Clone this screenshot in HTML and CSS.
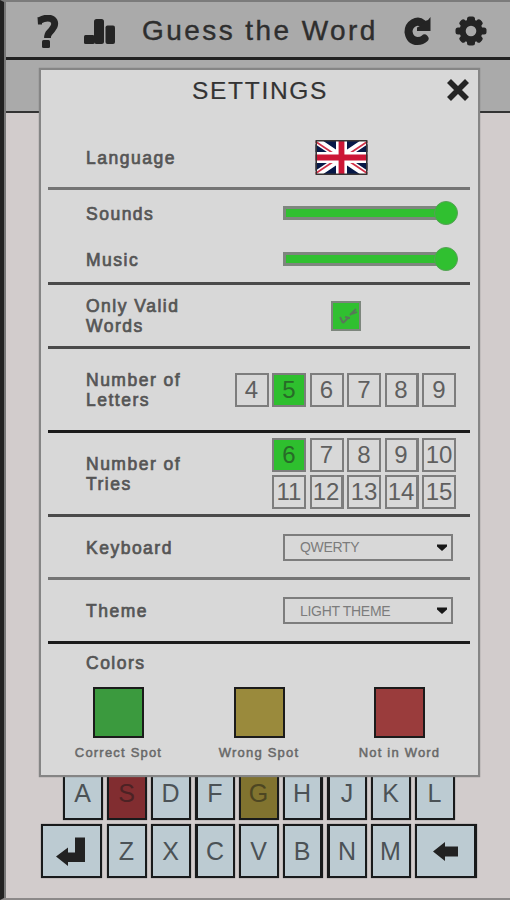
FILE: index.html
```html
<!DOCTYPE html>
<html lang="en">
<head>
<meta charset="utf-8">
<title>Guess the Word</title>
<link rel="stylesheet" href="styles.css">
</head>
<body>
<div class="app">
  <header class="topbar">
    <svg class="icon help" viewBox="0 0 24 34"><path d="M3.500 5.500Q11 1.500 16 4Q20 7 18 11.500Q16 15 13.500 17.500Q11.500 19.500 11.500 23" fill="none" stroke="#242424" stroke-width="6.800" stroke-linejoin="round"/><path d="M1.500 2L6 5V9.500H2Z" fill="#242424"/><rect x="6" y="25" width="8" height="8" rx="1.500" fill="#242424"/></svg>
    <svg class="icon stats" viewBox="0 0 32 26"><g fill="#242424"><rect x="0" y="16" width="10.500" height="9" rx="1.500"/><rect x="10" y="0" width="10" height="25" rx="2.500"/><rect x="21.500" y="6.500" width="9.500" height="18.500" rx="2"/></g></svg>
    <h1 class="title">Guess the Word</h1>
    <svg class="icon reload" viewBox="0 0 28 30"><path d="M18.500 7.500Q14.500 4 9.500 7Q4.500 10 4.500 16Q6 25 13.500 25Q18 25 20.500 22.500" fill="none" stroke="#242424" stroke-width="8" stroke-linecap="round"/><path d="M26.500 1V15H13V11.500L17 9.500L21 5L24 4Z" fill="#242424"/></svg>
    <svg class="icon gear" viewBox="-16 -15 32 30"><g fill="#242424"><rect x="-4" y="-14.500" width="8" height="29" rx="2.500"/><rect x="-15.500" y="-3.500" width="31" height="7" rx="2.500"/><g transform="rotate(45)"><rect x="-3.500" y="-14.500" width="7" height="29" rx="2.500"/><rect x="-14.500" y="-3.500" width="29" height="7" rx="2.500"/></g><circle r="11.500"/></g><circle r="5.300" fill="#aaa"/></svg>
  </header>
  <div class="subbar"></div>
  <main class="board">
    <div class="keys">
      <span class="key">A</span><span class="key red">S</span><span class="key">D</span><span class="key thick-l">F</span><span class="key gold">G</span><span class="key thick-r">H</span><span class="key thick-l">J</span><span class="key">K</span><span class="key">L</span>
    </div>
    <div class="keys">
      <span class="key wide enter"><svg viewBox="0 0 30 29"><path d="M19 .5H29V25H12V29L0 19.500L12 10.500V15.500H19Z"/></svg></span><span class="key">Z</span><span class="key">X</span><span class="key thick-l">C</span><span class="key">V</span><span class="key thick-r">B</span><span class="key thick-l">N</span><span class="key">M</span><span class="key wide back thick-r"><svg viewBox="0 0 25 19"><path d="M0 9.500L12 0V4.500H25V14.500H12V19Z"/></svg></span>
    </div>
  </main>
</div>

<section class="dialog">
  <div class="heading">
    <h2>SETTINGS</h2>
    <svg class="close" viewBox="0 0 24 24"><path d="M3 3L21 21M21 3L3 21" stroke="#242424" stroke-width="5.600"/></svg>
  </div>
  <div class="row language">
    <span class="label">Language</span>
    <svg class="flag" viewBox="0 0 52 35"><path fill="#071847" d="M0 0H52V35H0Z"/><path d="M0 0L52 35M52 0L0 35" stroke="#fff" stroke-width="7"/><path d="M0 1.500L24 17.500M28 17.500L52 33.500M52 1.500L28 17.500M24 17.500L0 33.500" stroke="#cf3148" stroke-width="1.700"/><path d="M26 0V35M0 17.500H52" stroke="#fff" stroke-width="11"/><path d="M26 0V35M0 17.500H52" stroke="#cc1636" stroke-width="5.800"/><path d="M.75 .75H51.250V34.250H.75Z" fill="none" stroke="#383434" stroke-width="1.500"/></svg>
  </div>
  <div class="row sound rule-soft"><span class="label">Sounds</span><span class="slider"><i class="knob"></i></span></div>
  <div class="row music"><span class="label">Music</span><span class="slider"><i class="knob"></i></span></div>
  <div class="row valid rule-mid"><span class="label">Only Valid<br>Words</span>
    <span class="check"><svg viewBox="0 0 26 26"><path d="M7 14L10 20" fill="none" stroke="#587759" stroke-width="2"/><path d="M10 20L15 15M17 12L23 6M12 14L17 15M19 11L24 9" fill="none" stroke="#587759" stroke-width="1.800"/></svg></span>
  </div>
  <div class="row letters rule-mid"><span class="label">Number of<br>Letters</span>
    <div class="nums six"><b>4</b><b class="on">5</b><b>6</b><b>7</b><b class="shade">8</b><b>9</b></div>
  </div>
  <div class="row tries rule-dark"><span class="label">Number of<br>Tries</span>
    <div class="nums five"><b class="on">6</b><b>7</b><b>8</b><b class="shade">9</b><b>10</b><b>11</b><b class="shade">12</b><b>13</b><b class="shade">14</b><b>15</b></div>
  </div>
  <div class="row keyboard rule-mid"><span class="label">Keyboard</span>
    <span class="select"><span>QWERTY</span><svg viewBox="0 0 10 7"><path d="M0 .5H10V2.500L5 7L0 2.500Z"/></svg></span>
  </div>
  <div class="row theme rule-soft"><span class="label">Theme</span>
    <span class="select"><span>LIGHT THEME</span><svg viewBox="0 0 10 7"><path d="M0 .5H10V2.500L5 7L0 2.500Z"/></svg></span>
  </div>
  <div class="colors rule-dark">
    <span class="label">Colors</span>
    <div class="swatches">
      <div class="swatch"><i class="green"></i><span>Correct Spot</span></div>
      <div class="swatch"><i class="yellow"></i><span>Wrong Spot</span></div>
      <div class="swatch"><i class="crimson"></i><span>Not in Word</span></div>
    </div>
  </div>
</section>
</body>
</html>
```
FILE: styles.css
```css
* { box-sizing: border-box; }
body {
  margin: 0;
  position: relative;
  width: 510px;
  height: 900px;
  overflow: hidden;
  font-family: "Liberation Sans", Arial, sans-serif;
}
svg { display: block; flex: none; }
.app {
  height: 900px;
  display: flex;
  flex-direction: column;
  border-left: 4px solid #222;
  border-top: 2px solid #7b7b7b;
  border-bottom: 2px solid #8c8989;
  background: #d2cccc;
  box-shadow: inset 2px 0 #777;
}
.topbar {
  height: 58px;
  margin-left: 2px;
  flex: none;
  display: flex;
  align-items: center;
  background: #aaa;
  border-bottom: 3px solid #222;
}
.help { width: 24px; height: 34px; margin-left: 30px; margin-top: 4px; }
.stats { width: 32px; height: 26px; margin-left: 24px; margin-top: 4px; }
.title {
  width: 262px;
  margin: 3px 0 0 26px;
  font-size: 28px;
  font-weight: 400;
  line-height: 34px;
  letter-spacing: 2.430px;
  color: #2e2e2e;
  -webkit-text-stroke: .4px #2e2e2e;
  white-space: nowrap;
}
.reload { width: 28px; height: 30px; margin-top: 3px; }
.gear { width: 32px; height: 30px; margin-left: 23px; margin-top: 3px; }
.subbar {
  height: 53px;
  margin-left: 2px;
  flex: none;
  background: #aaa;
  border-bottom: 2px solid #333;
}
.board {
  flex: 1;
  display: flex;
  flex-direction: column;
  justify-content: flex-end;
  align-items: center;
  gap: 4px;
  padding: 0 0 20px 3px;
}
.keys { display: flex; gap: 4px; }
.key {
  width: 40px;
  height: 54px;
  display: flex;
  align-items: center;
  justify-content: center;
  border: 2px solid #181a1b;
  background: #bccbd2;
  color: #4b5256;
  font-size: 25px;
  box-shadow: 0 0 1px #666;
}
.thick-l { border-left-width: 3px; }
.thick-r { border-right-width: 3px; }
.red { background: #812d30; color: #4c2224; }
.gold { background: #81732f; color: #4d4622; }
.wide { width: 62px; }
.key path { fill: #222; }
.enter { width: 61px; margin-right: 1px; }
.enter svg { width: 30px; height: 29px; }
.back svg { width: 25px; height: 19px; }

.dialog {
  position: absolute;
  left: 39px;
  top: 68px;
  width: 441px;
  height: 709px;
  padding: 0 8px 0 7px;
  display: flex;
  flex-direction: column;
  border: 2px solid #858585;
  background: #d8d8d8;
  box-shadow: 0 0 1px #777;
}
.heading { height: 57px; display: flex; justify-content: flex-end; flex: none; }
.heading h2 {
  margin: 6px 119px 0 0;
  font-size: 24.500px;
  line-height: 30px;
  font-weight: 400;
  letter-spacing: 1.700px;
  color: #333;
  -webkit-text-stroke: .2px #333;
  width: 135px;
  white-space: nowrap;
}
.close { width: 24px; height: 24px; margin: 8px 0 0; }
.row {
  display: flex;
  align-items: center;
  justify-content: space-between;
  padding: 0 14px 0 38px;
  flex: none;
}
.language { height: 60px; }
.sound { height: 49px; }
.music { height: 46px; }
.valid { height: 64px; }
.letters { height: 84px; }
.tries { height: 84px; }
.keyboard { height: 63px; }
.theme { height: 64px; }
.rule-soft { border-top: 3px solid #747474; }
.rule-mid { border-top: 3px solid #4a4a4a; }
.rule-dark { border-top: 3px solid #1b1b1b; }
.label {
  position: relative;
  top: .5px;
  font-size: 17.500px;
  line-height: 20px;
  letter-spacing: 1.500px;
  color: #555;
  -webkit-text-stroke: .7px #555;
  white-space: nowrap;
}
.flag { width: 53px; height: 35px; margin-right: 88px; }
.slider {
  width: 170px;
  height: 14px;
  margin-right: 3px;
  display: flex;
  align-items: center;
  justify-content: flex-end;
  border: 3px solid #7e867e;
  background: #30c030;
}
.knob {
  width: 24px;
  height: 24px;
  flex: none;
  margin-right: -8px;
  border-radius: 50%;
  background: #30c030;
  border: 1px solid #57a057;
}
.check {
  width: 30px;
  height: 30px;
  margin-right: 95px;
  border: 2px solid #7d867d;
  background: #30c030;
}
.nums { display: grid; gap: 3.500px; }
.six { grid-template-columns: repeat(6, 34px); }
.five { grid-template-columns: repeat(5, 34px); }
.nums b {
  height: 34px;
  display: flex;
  align-items: center;
  justify-content: center;
  border: 2px solid #7d7d7d;
  font-size: 24px;
  font-weight: 400;
  color: #5f5f5f;
}
.nums .on { background: #2ebf2e; color: #286b28; }
.nums .shade { border-right-width: 3px; }
.select {
  width: 170px;
  height: 27px;
  margin-right: 3px;
  padding: 0 4px 0 15px;
  display: flex;
  align-items: center;
  justify-content: space-between;
  border: 2px solid #7d7d7d;
  color: #7c7c7c;
  font-size: 14px;
  letter-spacing: -.300px;
}
.select svg { width: 10px; height: 7px; }
.select path { fill: #171717; }
.colors { flex: 1; padding-top: 8px; }
.colors .label { display: block; margin-left: 38px; }
.swatches { display: flex; justify-content: space-between; padding: 15px 20px 0; }
.swatch {
  width: 101px;
  display: flex;
  flex-direction: column;
  align-items: center;
  color: #686868;
  font-size: 13px;
  line-height: 16px;
  letter-spacing: 1.200px;
  -webkit-text-stroke: .5px #686868;
  white-space: nowrap;
}
.swatch i { width: 51px; height: 51px; border: 2px solid #1b1b1b; margin-bottom: 7px; }
.green { background: #3b9a3e; }
.yellow { background: #9a8a3c; }
.crimson { background: #9a3c3c; }
```
